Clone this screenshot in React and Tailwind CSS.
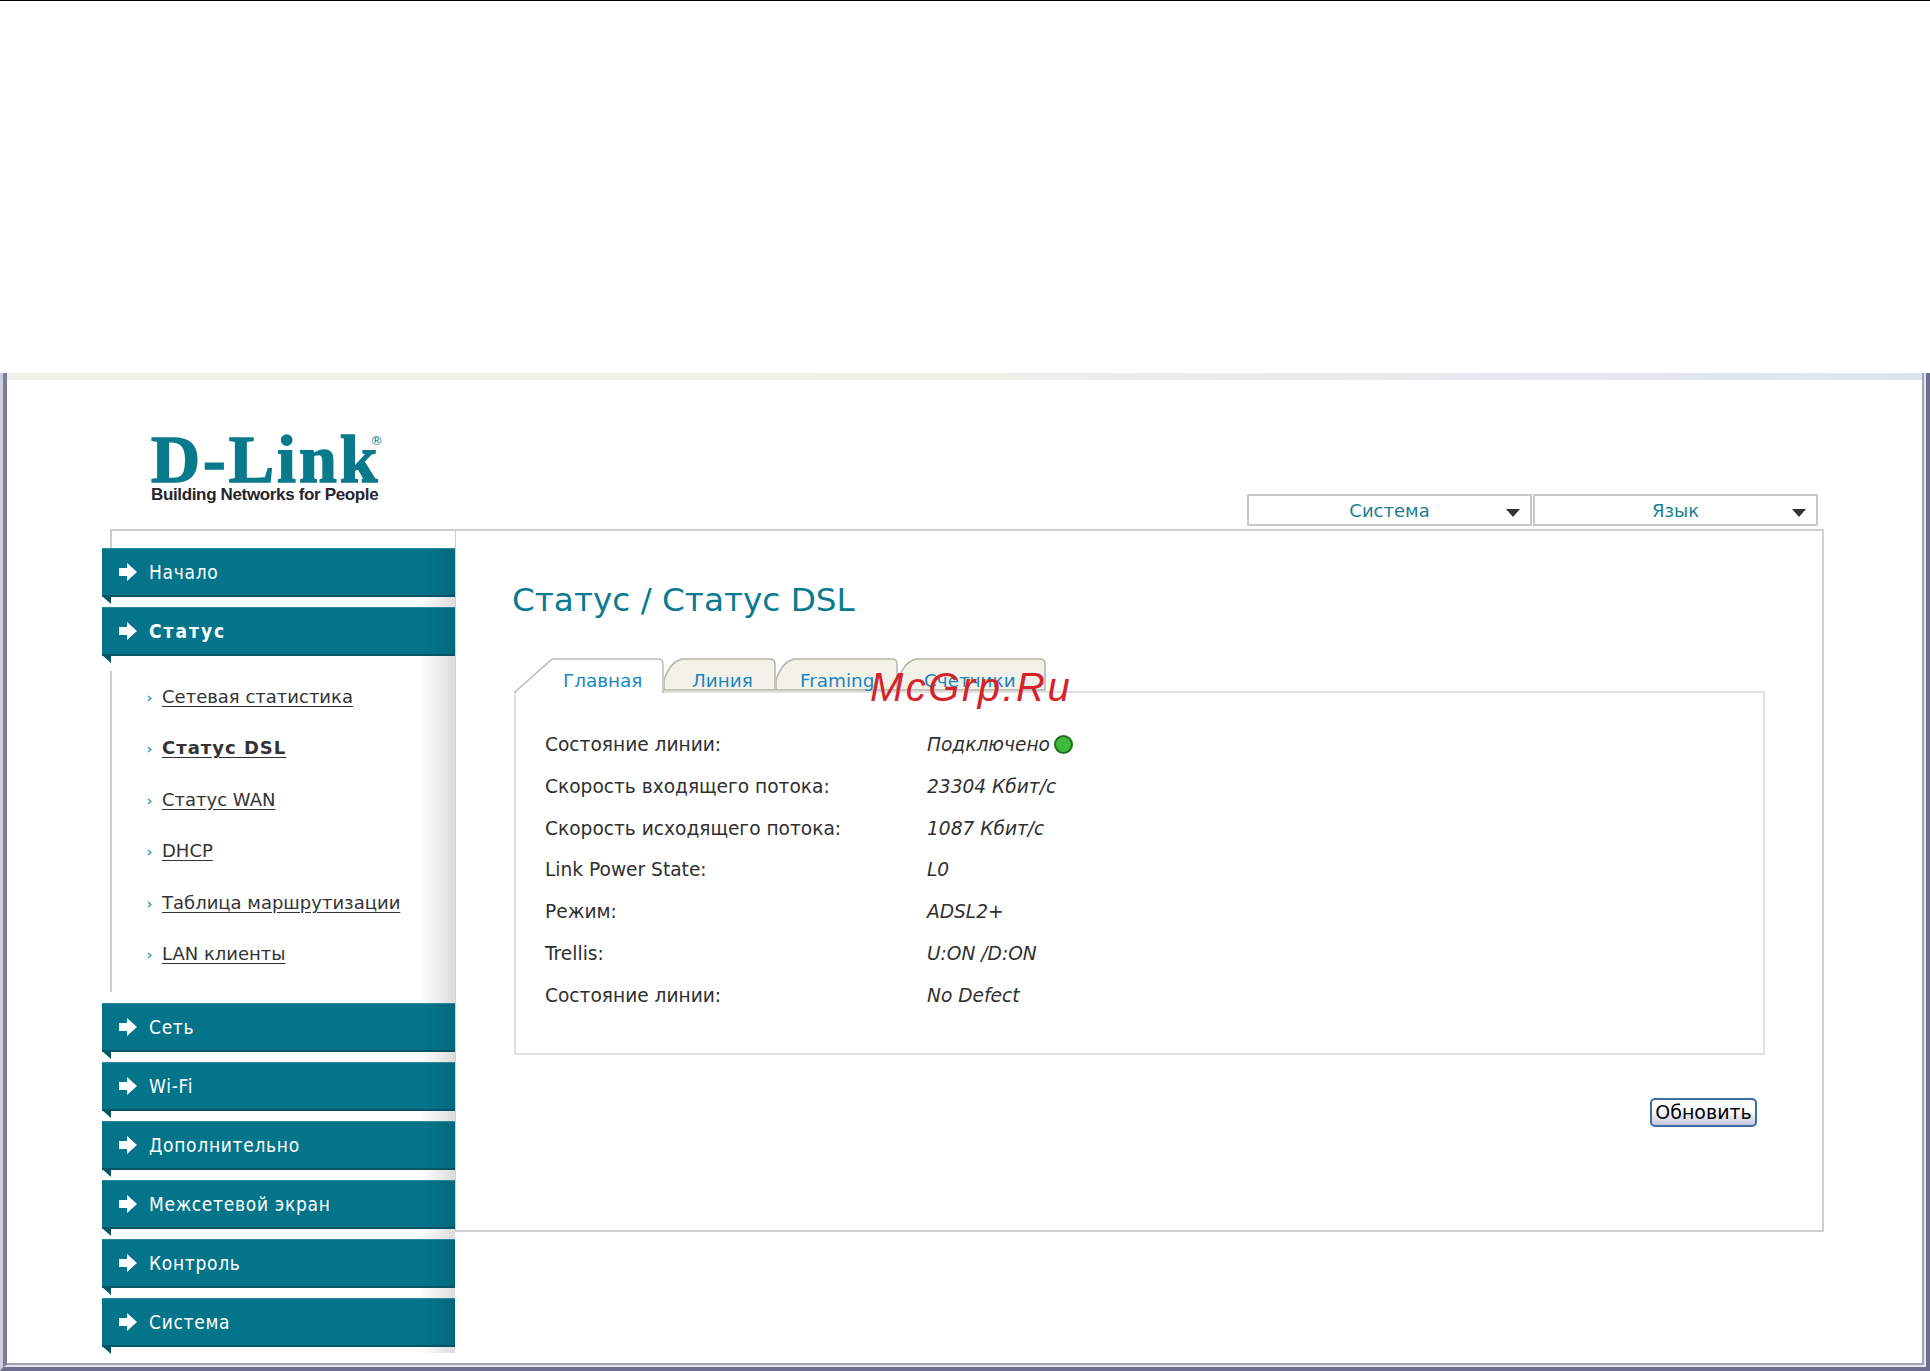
import React from "react";

const dejavu = "font-['DejaVu_Sans',sans-serif]";
const condensed = "font-['DejaVu_Sans_Condensed','DejaVu_Sans',sans-serif]";

function Arrow() {
  return (
    <svg width="18" height="18" viewBox="0 0 18 18" className="shrink-0">
      <polygon points="0,5 8,5 8,0 18,9 8,18 8,13 0,13" fill="#ffffff" />
    </svg>
  );
}

function MenuItem({ label, bold }) {
  return (
    <div className="relative h-[49px] w-[353px] flex items-center pl-[17px] text-white bg-[linear-gradient(to_right,#04748a_0%,#04748a_92%,#02687c_100%)] border-t border-t-[#2b8a9c] border-b-2 border-b-[#035465]">
      <Arrow />
      <span className={`ml-[12px] ${condensed} text-[19px] leading-none ${bold ? "font-bold tracking-[2px]" : "tracking-[0.7px]"}`}>{label}</span>
      <svg width="9" height="8" viewBox="0 0 9 8" className="absolute left-0 top-[47px]">
        <polygon points="0,0 9,0 9,8" fill="#035465" />
      </svg>
    </div>
  );
}

function SubItem({ label, active }) {
  return (
    <div className="h-[51.5px] flex items-center pl-[35px]">
      <svg width="5" height="7" viewBox="0 0 5 7" className="shrink-0 mt-[3px]">
        <polyline points="1,1 4,3.5 1,6" fill="none" stroke="#3a9cb0" strokeWidth="1.4" />
      </svg>
      <span className={`ml-[10px] text-[18px] leading-none text-[#333] underline underline-offset-[3px] decoration-[#333] ${active ? "font-bold tracking-[1px]" : ""}`}>{label}</span>
    </div>
  );
}

function DropBox({ label }) {
  return (
    <div className="relative w-[285px] h-[32px] border-2 border-[#c8c8c8] flex items-center justify-center text-[18px] text-[#1a7f92]">
      {label}
      <svg width="14" height="8" viewBox="0 0 14 8" className="absolute right-[10px] top-[13px]">
        <polygon points="0,0 14,0 7,8" fill="#333333" />
      </svg>
    </div>
  );
}

function Tab({ label, width, active, textPad }) {
  return (
    <div className={`relative ${active ? "mb-[-2px] h-[35px] z-30" : "h-[33px]"}`} style={{ width }}>
      <svg className="absolute inset-0 w-full h-full" viewBox={active ? `0 0 ${width} 35` : `0 0 ${width} 33`}>
        {active ? (
          <path d={`M1 35 V34 L37 2 Q39 1 42 1 H${width - 6} Q${width - 1} 1 ${width - 1} 6 V35`} fill="#ffffff" stroke="#bcbcb4" strokeWidth="1.5" />
        ) : (
          <path d={`M0 32 V22 Q6 4 18 1 H${width - 6} Q${width - 1} 1 ${width - 1} 6 V32 Z`} fill="#f3f2e8" stroke="#b4b4a8" strokeWidth="1.5" />
        )}
      </svg>
      <span className="absolute top-[11px] text-[18.4px] leading-[24px] text-[#1d86bf]" style={{ left: textPad }}>{label}</span>
    </div>
  );
}

const rows = [
  ["Состояние линии:", "Подключено", true],
  ["Скорость входящего потока:", "23304 Кбит/с"],
  ["Скорость исходящего потока:", "1087 Кбит/с"],
  ["Link Power State:", "L0"],
  ["Режим:", "ADSL2+"],
  ["Trellis:", "U:ON /D:ON"],
  ["Состояние линии:", "No Defect"],
];

export default function App() {
  return (
    <div className={`w-[1930px] h-[1371px] bg-white flex flex-col ${dejavu}`}>
      <div className="h-px bg-black shrink-0" />
      <div className="h-[372px] shrink-0" />
      <div className="flex-1 flex flex-col border-l-[3px] border-l-[#d0d0dc] border-r-[4px] border-r-[#6d6d8d] border-b-[4px] border-b-[#6d6d8d]">
        <div className="flex-1 flex flex-col border-l-[4px] border-l-[#7c7c9c] border-r-2 border-r-[#e4e4ec] border-b-2 border-b-[#e4e4ec]">
          <div className="flex-1 flex flex-col border-r-2 border-b-2 border-[#a0a0b8] bg-white">
            <div className="h-[7px] shrink-0 bg-[linear-gradient(to_right,#f1f1ea,#f1f1ea_40%,#e0e3ed)]" />
            <div className="flex h-[149px] shrink-0 items-end justify-between pl-[144px] pr-[104px] pb-[3px]">
              <div className="self-start mt-[51px] text-[#087a8c] relative w-[235px]">
                <div className="font-['Liberation_Serif',serif] font-bold text-[68px] leading-[56px] tracking-[3px] h-[54px] [-webkit-text-stroke:1.5px_#087a8c]">D-Link</div>
                <span className="absolute right-[3px] top-[3px] text-[13px] leading-none">®</span>
                <div className="font-['Liberation_Sans',sans-serif] font-bold text-[17px] leading-[19px] tracking-[-0.35px] text-[#26262c] whitespace-nowrap">Building Networks for People</div>
              </div>
              <div className="flex gap-px">
                <DropBox label="Система" />
                <DropBox label="Язык" />
              </div>
            </div>
            <div className="flex items-start pl-[95px] pr-[98px]">
              <div className="w-[353px] shrink-0">
                <div className="ml-[8px] h-[19px] border-t-2 border-l-2 border-[#ccc]" />
                <div className="bg-[linear-gradient(to_right,#ffffff_90%,#dcdcdc_100%)] pb-[6px]">
                  <div className="mb-[10px]"><MenuItem label="Начало" /></div>
                  <MenuItem label="Статус" bold />
                  <div className="ml-[8px] mt-[16px] mb-[10px] h-[321px] border-l-2 border-[#ccc] -translate-y-[1px]">
                    <SubItem label="Сетевая статистика" />
                    <SubItem label="Статус DSL" active />
                    <SubItem label="Статус WAN" />
                    <SubItem label="DHCP" />
                    <SubItem label="Таблица маршрутизации" />
                    <SubItem label="LAN клиенты" />
                  </div>
                  {["Сеть", "Wi-Fi", "Дополнительно", "Межсетевой экран", "Контроль"].map((l) => (
                    <div key={l} className="mb-[10px]"><MenuItem label={l} /></div>
                  ))}
                  <MenuItem label="Система" />
                </div>
              </div>
              <div className="flex-1 h-[703px] border-t-2 border-r-2 border-b-2 border-l border-[#d0d0d0] pl-[56px] pr-[57px] flex flex-col">
                <h1 className="mt-[49px] h-[40px] text-[32.7px] leading-[40px] text-[#0a7b8e]">Статус / Статус DSL</h1>
                <div className="ml-[2px] relative mt-[38px] flex h-[33px] z-10">
                  <Tab label="Главная" width={150} active textPad={49} />
                  <Tab label="Линия" width={112} textPad={28} />
                  <Tab label="Framing" width={122} textPad={24} />
                  <Tab label="Счетчики" width={148} textPad={26} />
                  <span className="absolute left-[356px] top-[7px] z-40 font-['Liberation_Sans',sans-serif] italic text-[40px] leading-[44px] tracking-[2.5px] text-[#d8222a] whitespace-nowrap">McGrp.Ru</span>
                </div>
                <div className="ml-[2px] h-[364px] border-2 border-[#e2e2e2] pl-[29px] pt-[31px]">
                  {rows.map(([a, b, dot], i) => (
                    <div key={i} className="h-[41.8px] flex items-center text-[18.6px] text-[#2f2f2f]">
                      <div className="w-[382px] shrink-0">{a}</div>
                      <div className="italic flex items-center">
                        {b}
                        {dot && <span className="ml-[4px] w-[19px] h-[19px] rounded-full bg-[#3dbb3a] border-2 border-[#1f6f1f]" />}
                      </div>
                    </div>
                  ))}
                </div>
                <div className="flex justify-end pr-[8px] mt-[43px]">
                  <button className="w-[107px] h-[29px] rounded-[5px] border-2 border-[#3a6ea5] bg-[linear-gradient(to_bottom,#ffffff_40%,#c6c6dc)] text-[19px] leading-none text-black">Обновить</button>
                </div>
              </div>
            </div>
          </div>
        </div>
      </div>
    </div>
  );
}
